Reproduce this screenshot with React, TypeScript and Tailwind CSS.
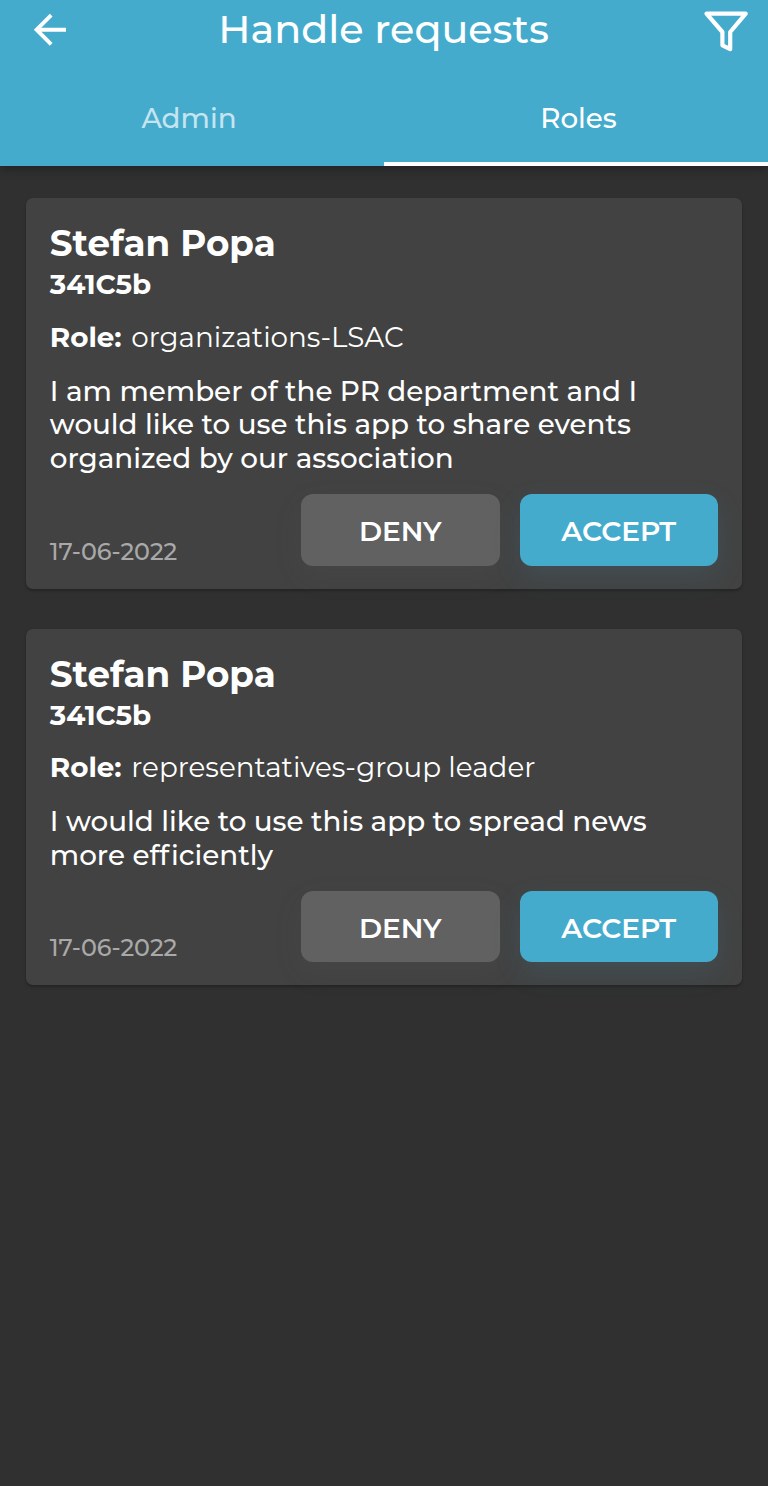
import React from "react";

type Request = {
  name: string;
  group: string;
  role: string;
  lines: React.ReactNode[];
  date: string;
};

const requests: Request[] = [
  {
    name: "Stefan Popa",
    group: "341C5b",
    role: "organizations-LSAC",
    lines: [
      "I am member of the PR department and I",
      "would like to use this app to share events",
      "organized by our association",
    ],
    date: "17-06-2022",
  },
  {
    name: "Stefan Popa",
    group: "341C5b",
    role: "representatives-group leader",
    lines: [
      "I would like to use this app to spread news",
      <>more <span className="mr-[2px]">eff</span>iciently</>,
    ],
    date: "17-06-2022",
  },
];

function BackIcon() {
  return (
    <svg className="h-[34px] w-[34px]" viewBox="0 0 34 34" fill="none" stroke="currentColor" strokeWidth="3.9">
      <path d="M33 16.7H4M18.2 2.1 3.6 16.7l14.6 14.6" />
    </svg>
  );
}

function FilterIcon() {
  return (
    <svg className="h-[42px] w-[46px]" viewBox="0 0 46 42" fill="none" stroke="currentColor" strokeWidth="4.2" strokeLinecap="round" strokeLinejoin="round">
      <path d="M3.5 3.7h39.2L27.2 22v17.2l-7.8-3.9V22z" />
    </svg>
  );
}

function RequestCard({ request }: { request: Request }) {
  return (
    <article className="rounded-[7px] bg-[#424242] px-6 pt-[24.2px] pb-[23px] shadow-[0_2px_3px_rgba(0,0,0,0.25)]">
      <h2 className="-ml-[0.2px] text-[35.7px] leading-[43px] font-bold">{request.name}</h2>
      <p className="-ml-[0.2px] text-[27.8px] leading-[38px] font-bold">{request.group}</p>
      <p className="mt-[16.5px] flex text-[27.8px] leading-[34px] whitespace-nowrap">
        <span className="-ml-[0.2px] w-[81.5px] font-bold">Role:</span>
        <span className="font-normal">{request.role}</span>
      </p>
      <div className="mt-[21px] -ml-[0.2px] text-[27.8px] leading-[33.5px] font-medium whitespace-nowrap">
        {request.lines.map((line, index) => (
          <p key={index}>{line}</p>
        ))}
      </div>
      <div className="mt-[18.8px] flex items-end gap-5">
        <time className="mr-auto -ml-[0.2px] text-[23.8px] leading-[29px] font-medium text-[#a9a9a9]">{request.date}</time>
        <button className="h-[71.3px] w-[198.5px] rounded-xl bg-[#616161] pt-[2.4px] text-[28px] font-semibold shadow-[0_10px_28px_rgba(97,97,97,0.12)]">
          DENY
        </button>
        <button className="h-[71.3px] w-[198.5px] rounded-xl bg-[#44abcd] pt-[2.4px] text-[28px] font-semibold shadow-[0_10px_28px_rgba(68,171,205,0.13)]">
          ACCEPT
        </button>
      </div>
    </article>
  );
}

export default function App() {
  return (
    <div className="min-h-[1486px] w-full bg-[#303030] font-['Montserrat','Inter',sans-serif] text-white">
      <header className="bg-[#44abcd] shadow-[0_3px_10px_rgba(0,0,0,0.3)]">
        <div className="flex h-[58px] items-center justify-between pr-[19px] pl-[33px]">
          <button aria-label="Back" className="w-[32px] pt-px"><BackIcon /></button>
          <h1 className="-ml-px text-[39.7px] leading-[58px] font-medium whitespace-nowrap">Handle requests</h1>
          <button aria-label="Filter" className="pt-1"><FilterIcon /></button>
        </div>
        <nav className="grid h-[108.3px] grid-cols-2 text-[27.8px] font-medium">
          <button className="border-b-4 border-transparent pt-[18px] pr-[6px] text-white/70">Admin</button>
          <button className="border-b-4 border-white pt-[18px] pl-[5px]">Roles</button>
        </nav>
      </header>
      <main className="flex flex-col gap-10 px-[26px] pt-8">
        {requests.map((request) => (
          <RequestCard key={request.role} request={request} />
        ))}
      </main>
    </div>
  );
}
